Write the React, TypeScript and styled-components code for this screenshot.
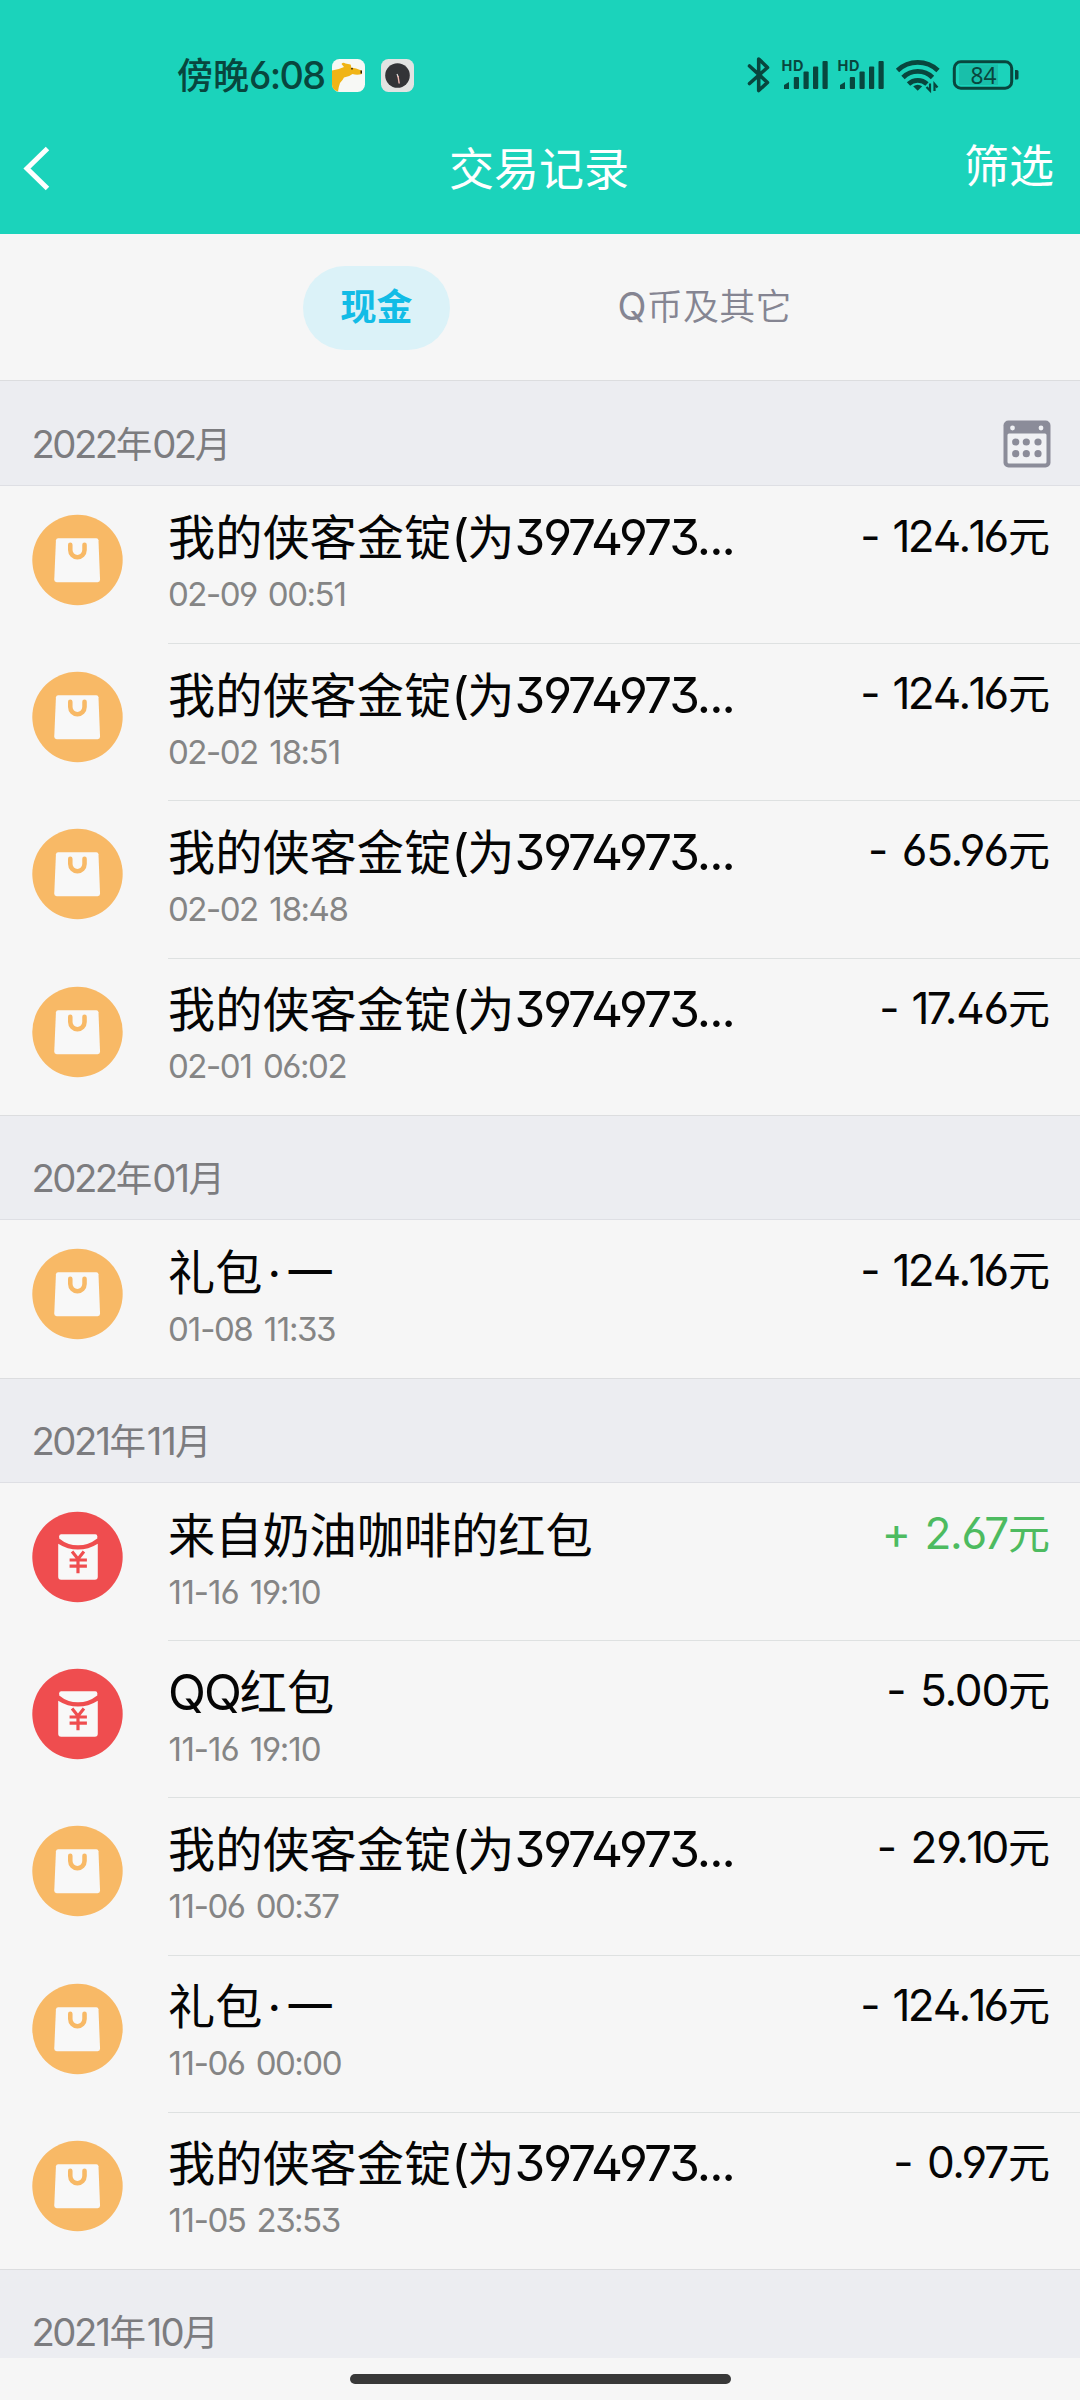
import React from 'react';
import styled, { createGlobalStyle } from 'styled-components';

const GlobalStyle = createGlobalStyle`
  *, *::before, *::after { box-sizing: border-box; }
  body {
    margin: 0;
    background: #f6f6f6;
    font-family: "Noto Sans CJK SC", sans-serif;
    color: #050505;
  }
`;

const INK = '#08463e';

const Screen = styled.div`
  width: 1080px;
  height: 2400px;
  display: flex;
  flex-direction: column;
  overflow: hidden;
  background: #f6f6f6;
`;

const Latin = styled.span`
  font-family: Inter, sans-serif;
  font-feature-settings: "ss01";
  font-size: 1.05em;
  line-height: 0;
  white-space: pre;
`;

const One = styled.span``;

const Dot = styled.span`
  display: inline-block;
  width: 0.51em;
  line-height: 0;
  text-align: center;
  font-family: Inter, sans-serif;
`;

/* Sets digits and Latin letters in Inter beside the CJK face. */
function Mixed({ text }: { text: string }) {
  return (
    <>
      {text.split(/([\x20-\x7e]+|·)/).map((part, i) => {
        if (i % 2 === 0) return part;
        if (part === '·') return <Dot key={i}>·</Dot>;
        return (
          <Latin key={i}>
            {part.split(/(1)/).map((c, j) => (c === '1' ? <One key={j}>1</One> : c))}
          </Latin>
        );
      })}
    </>
  );
}

const Header = styled.header`
  flex: none;
  height: 234px;
  background: #1bd3bb;
  display: flex;
  flex-direction: column;
`;

const StatusBar = styled.div`
  height: 108px;
  padding: 56px 61px 0 177px;
  display: flex;
  align-items: flex-start;
  justify-content: space-between;
  color: ${INK};
`;

const StatusGroup = styled.div`
  display: flex;
  align-items: flex-start;
`;

const Clock = styled.span`
  font-size: 36px;
  font-weight: 500;
  line-height: 36px;
  margin-top: -1px;
  width: 155px;
  white-space: nowrap;
  ${Latin} { letter-spacing: -0.045em; font-weight: 500; }
`;

const AppIcon = styled.svg`
  width: 33px;
  height: 33px;
  margin: 3px 15.5px 0 0;
`;

const StatusIcons = styled.svg`
  width: 274px;
  height: 40px;
`;

const NavBar = styled.nav`
  height: 126px;
  padding: 0 26px 0 22px;
  display: grid;
  grid-template-columns: 1fr auto 1fr;
`;

const BackIcon = styled.svg`
  width: 30px;
  height: 48px;
  margin-top: 36px;
`;

const NavTitle = styled.h1`
  margin: 29px 0 0 2px;
  font-size: 45px;
  font-weight: 400;
  line-height: 60px;
  color: #fff;
`;

const NavAction = styled.span`
  justify-self: end;
  margin-top: 26px;
  font-size: 45px;
  line-height: 60px;
  color: #fff;
`;

const Tabs = styled.div`
  flex: none;
  height: 146.4px;
  padding: 32px 0 0 303px;
  display: flex;
  gap: 130px;
`;

const Tab = styled.span<{ $active?: boolean }>`
  height: 84px;
  line-height: 77px;
  padding: 0 37.5px;
  border-radius: 42px;
  font-size: 36px;
  letter-spacing: ${p => (p.$active ? '0' : '0.3px')};
  white-space: nowrap;
  font-weight: ${p => (p.$active ? 700 : 350)};
  color: ${p => (p.$active ? '#12bce6' : '#858592')};
  background: ${p => (p.$active ? '#dbf2f8' : 'transparent')};
  ${Latin} { font-weight: 400; }
`;

const List = styled.main`
  flex: none;
  height: 1977.6px;
  overflow: hidden;
`;

const MonthBar = styled.div`
  height: 105.6px;
  padding: 37.2px 29px 0 31.5px;
  display: flex;
  justify-content: space-between;
  background: #ecedf1;
  border-top: 1px solid #dcdddf;
  border-bottom: 1px solid #dedfe4;
`;

const MonthLabel = styled.span`
  font-size: 36.5px;
  font-weight: 400;
  line-height: 48px;
  white-space: nowrap;
  color: #7c7c7f;
  ${Latin} { letter-spacing: -0.066em; }
  ${One} { margin: 0 0.02em; }
`;

const CalendarIcon = styled.svg`
  width: 48px;
  height: 48px;
  margin-top: 1.3px;
`;

const Row = styled.div`
  height: 157.2px;
  display: grid;
  grid-template-columns: 168px 1fr;
`;

const RowIcon = styled.svg`
  width: 91px;
  height: 92px;
  margin: 28px 0 0 32px;
`;

const RowBody = styled.div<{ $divided: boolean }>`
  padding-right: 30px;
  display: flex;
  justify-content: space-between;
  border-top: 1px solid ${p => (p.$divided ? '#dee1e1' : 'transparent')};
`;

const RowText = styled.div`
  padding-top: 18.5px;
  white-space: nowrap;
`;

const RowTitle = styled.div`
  font-size: 47.2px;
  line-height: 60px;
  ${Latin} { letter-spacing: -0.04em; }
`;

const RowDate = styled.div`
  margin-top: 7px;
  font-size: 31.5px;
  line-height: 40px;
  color: #858585;
  ${Latin} { letter-spacing: -0.046em; word-spacing: 0.1em; }
  ${One} { margin: 0 0.015em; }
`;

const Amount = styled.div<{ $income: boolean }>`
  padding-top: 17px;
  font-size: 42px;
  line-height: 60px;
  white-space: nowrap;
  color: ${p => (p.$income ? '#4dbb60' : '#050505')};
  ${Latin} { letter-spacing: -0.028em; word-spacing: 0.08em; }
  ${One} { margin: 0 -0.035em; }
`;

const HomeArea = styled.footer`
  flex: 1;
  display: flex;
  justify-content: center;
  padding-top: 16px;
`;

const HomeBar = styled.div`
  width: 381px;
  height: 10px;
  border-radius: 5px;
  background: #383838;
`;

function BagIcon() {
  return (
    <RowIcon viewBox="0 0 92 92">
      <circle cx="46" cy="46" r="45.7" fill="#f8b966" />
      <path d="M26.5 24h38.5q2 0 2.200 2l1.600 40q0 2.500-2.500 2.500H25q-2.500 0-2.500-2.500l1.700-40q.2-2 2.300-2z" fill="#f8f8f8" />
      <path d="M38.700 30.500v5.500a7.200 7.200 0 0 0 14.400 0v-5.500" fill="none" stroke="#f8b966" strokeWidth="4.6" strokeLinecap="round" />
    </RowIcon>
  );
}

function PacketIcon() {
  return (
    <RowIcon viewBox="0 0 92 92">
      <circle cx="46" cy="46" r="45.7" fill="#ef4d4f" />
      <path d="M29.500 23h34.500q2 0 2 2v2.200q-9 7-19.500 7T27.500 27.200V25q0-2 2-2z" fill="#f8f8f8" />
      <path d="M26.500 32.500q9.500 6 20 6t20-6v33.500q0 3-3 3h-34q-3 0-3-3z" fill="#f8f8f8" />
      <path d="M40.500 40.500l6 7.500 6-7.500M38 49h17.500M38 55.300h17.500M46.500 48v14.500" fill="none" stroke="#ef4d4f" strokeWidth="3.2" />
    </RowIcon>
  );
}

function Calendar() {
  return (
    <CalendarIcon viewBox="0 0 48 48">
      <rect x=".5" y=".5" width="47" height="47" rx="5" fill="#8b8c99" />
      <rect x="4.5" y="13.5" width="39" height="30" rx="1.5" fill="#f0f1f4" />
      <circle cx="9.5" cy="8" r="2.4" fill="#f0f1f4" />
      <circle cx="38" cy="8" r="2.4" fill="#f0f1f4" />
      {[22, 33.7].map(y => [12.7, 23.3, 35].map(x => (
        <circle key={`${x}-${y}`} cx={x} cy={y} r="3.6" fill="#8b8c99" />
      )))}
    </CalendarIcon>
  );
}

function Signal({ x }: { x: number }) {
  return (
    <g transform={`translate(${x} 0)`} fill={INK}>
      <text x="-.5" y="14.8" fontFamily="Inter, sans-serif" fontWeight="700" fontSize="14.5" textLength="22">HD</text>
      <path d="M2 33v-4l5-3v7z" />
      <rect x="11.8" y="21" width="5.2" height="12" rx="1" />
      <rect x="21.5" y="15.5" width="5.2" height="17.5" rx="1" />
      <rect x="31" y="10.5" width="5.2" height="22.5" rx="1" />
      <rect x="40.5" y="5" width="5.2" height="28" rx="1" />
    </g>
  );
}

/* Drawn in a 274x40 strip: bluetooth, two SIM signals, wifi, battery. */
function SystemIcons() {
  return (
    <StatusIcons viewBox="0 0 274 40">
      <path d="M4.500 10L22.500 26.500 13.700 34.500V3L22.500 11.500 4.500 27.500" fill="none" stroke={INK} strokeWidth="3.6" strokeLinejoin="round" strokeLinecap="round" />
      <Signal x={37} />
      <Signal x={93} />
      <g fill="none" stroke={INK} strokeWidth="4.8">
        <path d="M152.500 14.500a29.500 29.500 0 0 1 40.500 0" />
        <path d="M158 21.500a21 21 0 0 1 29.500 0" />
        <path d="M163.500 28a13.500 13.500 0 0 1 18.500 0" />
      </g>
      <path d="M172.700 34.800l-4.500-4.600q4.500-3 9 0z" fill={INK} />
      <path d="M185 27.500v7l-3.500-3.500M189.500 35v-7l3 3.500" fill="none" stroke={INK} strokeWidth="2.2" />
      <rect x="214" y="8.5" width="39" height="20.5" fill="#19bfaa" />
      <rect x="209.3" y="5.8" width="57.4" height="26.4" rx="6.5" fill="none" stroke={INK} strokeWidth="3" />
      <path d="M270 14h2q1.500 0 1.500 1.500v6.500q0 1.500-1.500 1.500h-2z" fill={INK} />
      <text x="225.500" y="27.5" fontFamily='"Noto Sans", sans-serif' fontSize="23.5" textLength="26" lengthAdjust="spacingAndGlyphs" fill={INK}>84</text>
    </StatusIcons>
  );
}

type Item = { kind: 'bag' | 'packet'; title: string; date: string; amount: string };
const bag = (title: string, date: string, amount: string): Item => ({ kind: 'bag', title, date, amount });
const packet = (title: string, date: string, amount: string): Item => ({ kind: 'packet', title, date, amount });
const GOLD = '我的侠客金锭(为3974973...';

const MONTHS: { label: string; items: Item[] }[] = [
  {
    label: '2022年02月',
    items: [
      bag(GOLD, '02-09 00:51', '- 124.16元'),
      bag(GOLD, '02-02 18:51', '- 124.16元'),
      bag(GOLD, '02-02 18:48', '- 65.96元'),
      bag(GOLD, '02-01 06:02', '- 17.46元'),
    ],
  },
  { label: '2022年01月', items: [bag('礼包·一', '01-08 11:33', '- 124.16元')] },
  {
    label: '2021年11月',
    items: [
      packet('来自奶油咖啡的红包', '11-16 19:10', '+ 2.67元'),
      packet('QQ红包', '11-16 19:10', '- 5.00元'),
      bag(GOLD, '11-06 00:37', '- 29.10元'),
      bag('礼包·一', '11-06 00:00', '- 124.16元'),
      bag(GOLD, '11-05 23:53', '- 0.97元'),
    ],
  },
  { label: '2021年10月', items: [] },
];

export default function App() {
  return (
    <Screen>
      <GlobalStyle />
      <Header>
        <StatusBar>
          <StatusGroup>
            <Clock><Mixed text="傍晚6:08" /></Clock>
            <AppIcon viewBox="0 0 33 33">
              <rect width="33" height="33" rx="7.5" fill="#f7f8f5" />
              <path d="M0 11.500q7-1 12-3.500l-2.500-3q1.500-2 4-.5l5 1q1 1.500.5 3 5 .5 10.500 3l.5 3.500q-5 1.500-9.500 0Q17 18 12 18.500q-1.500 3-4 5.500-1.500 4-2 8.500Q0 31 0 25.500z" fill="#f0b416" />
              <circle cx="20" cy="9.700" r=".9" fill="#3a2a08" />
              <path d="M28.500 11.500h1.500v3h-1.500z" fill="#2a2008" />
            </AppIcon>
            <AppIcon viewBox="0 0 33 33">
              <rect width="33" height="33" rx="7.5" fill="#e2e3e2" />
              <circle cx="16.5" cy="16.5" r="12.3" fill="#333437" />
              <path d="M16 15l1.200 3" stroke="#ddd" strokeWidth="1.2" />
              <path d="M17 17l1.200 7.500" stroke="#f0b9b3" strokeWidth="1.4" />
            </AppIcon>
          </StatusGroup>
          <SystemIcons />
        </StatusBar>
        <NavBar>
          <BackIcon viewBox="0 0 30 48">
            <path d="M25.500 4.500L5 24.500l20.500 20" fill="none" stroke="#fff" strokeWidth="5" />
          </BackIcon>
          <NavTitle>交易记录</NavTitle>
          <NavAction>筛选</NavAction>
        </NavBar>
      </Header>
      <Tabs>
        <Tab $active>现金</Tab>
        <Tab><Mixed text="Q币及其它" /></Tab>
      </Tabs>
      <List>
        {MONTHS.map((month, m) => (
          <section key={month.label}>
            <MonthBar>
              <MonthLabel><Mixed text={month.label} /></MonthLabel>
              {m === 0 && <Calendar />}
            </MonthBar>
            {month.items.map((item, i) => (
              <Row key={i}>
                {item.kind === 'bag' ? <BagIcon /> : <PacketIcon />}
                <RowBody $divided={i > 0}>
                  <RowText>
                    <RowTitle><Mixed text={item.title} /></RowTitle>
                    <RowDate><Mixed text={item.date} /></RowDate>
                  </RowText>
                  <Amount $income={item.amount[0] === '+'}><Mixed text={item.amount} /></Amount>
                </RowBody>
              </Row>
            ))}
          </section>
        ))}
      </List>
      <HomeArea><HomeBar /></HomeArea>
    </Screen>
  );
}
